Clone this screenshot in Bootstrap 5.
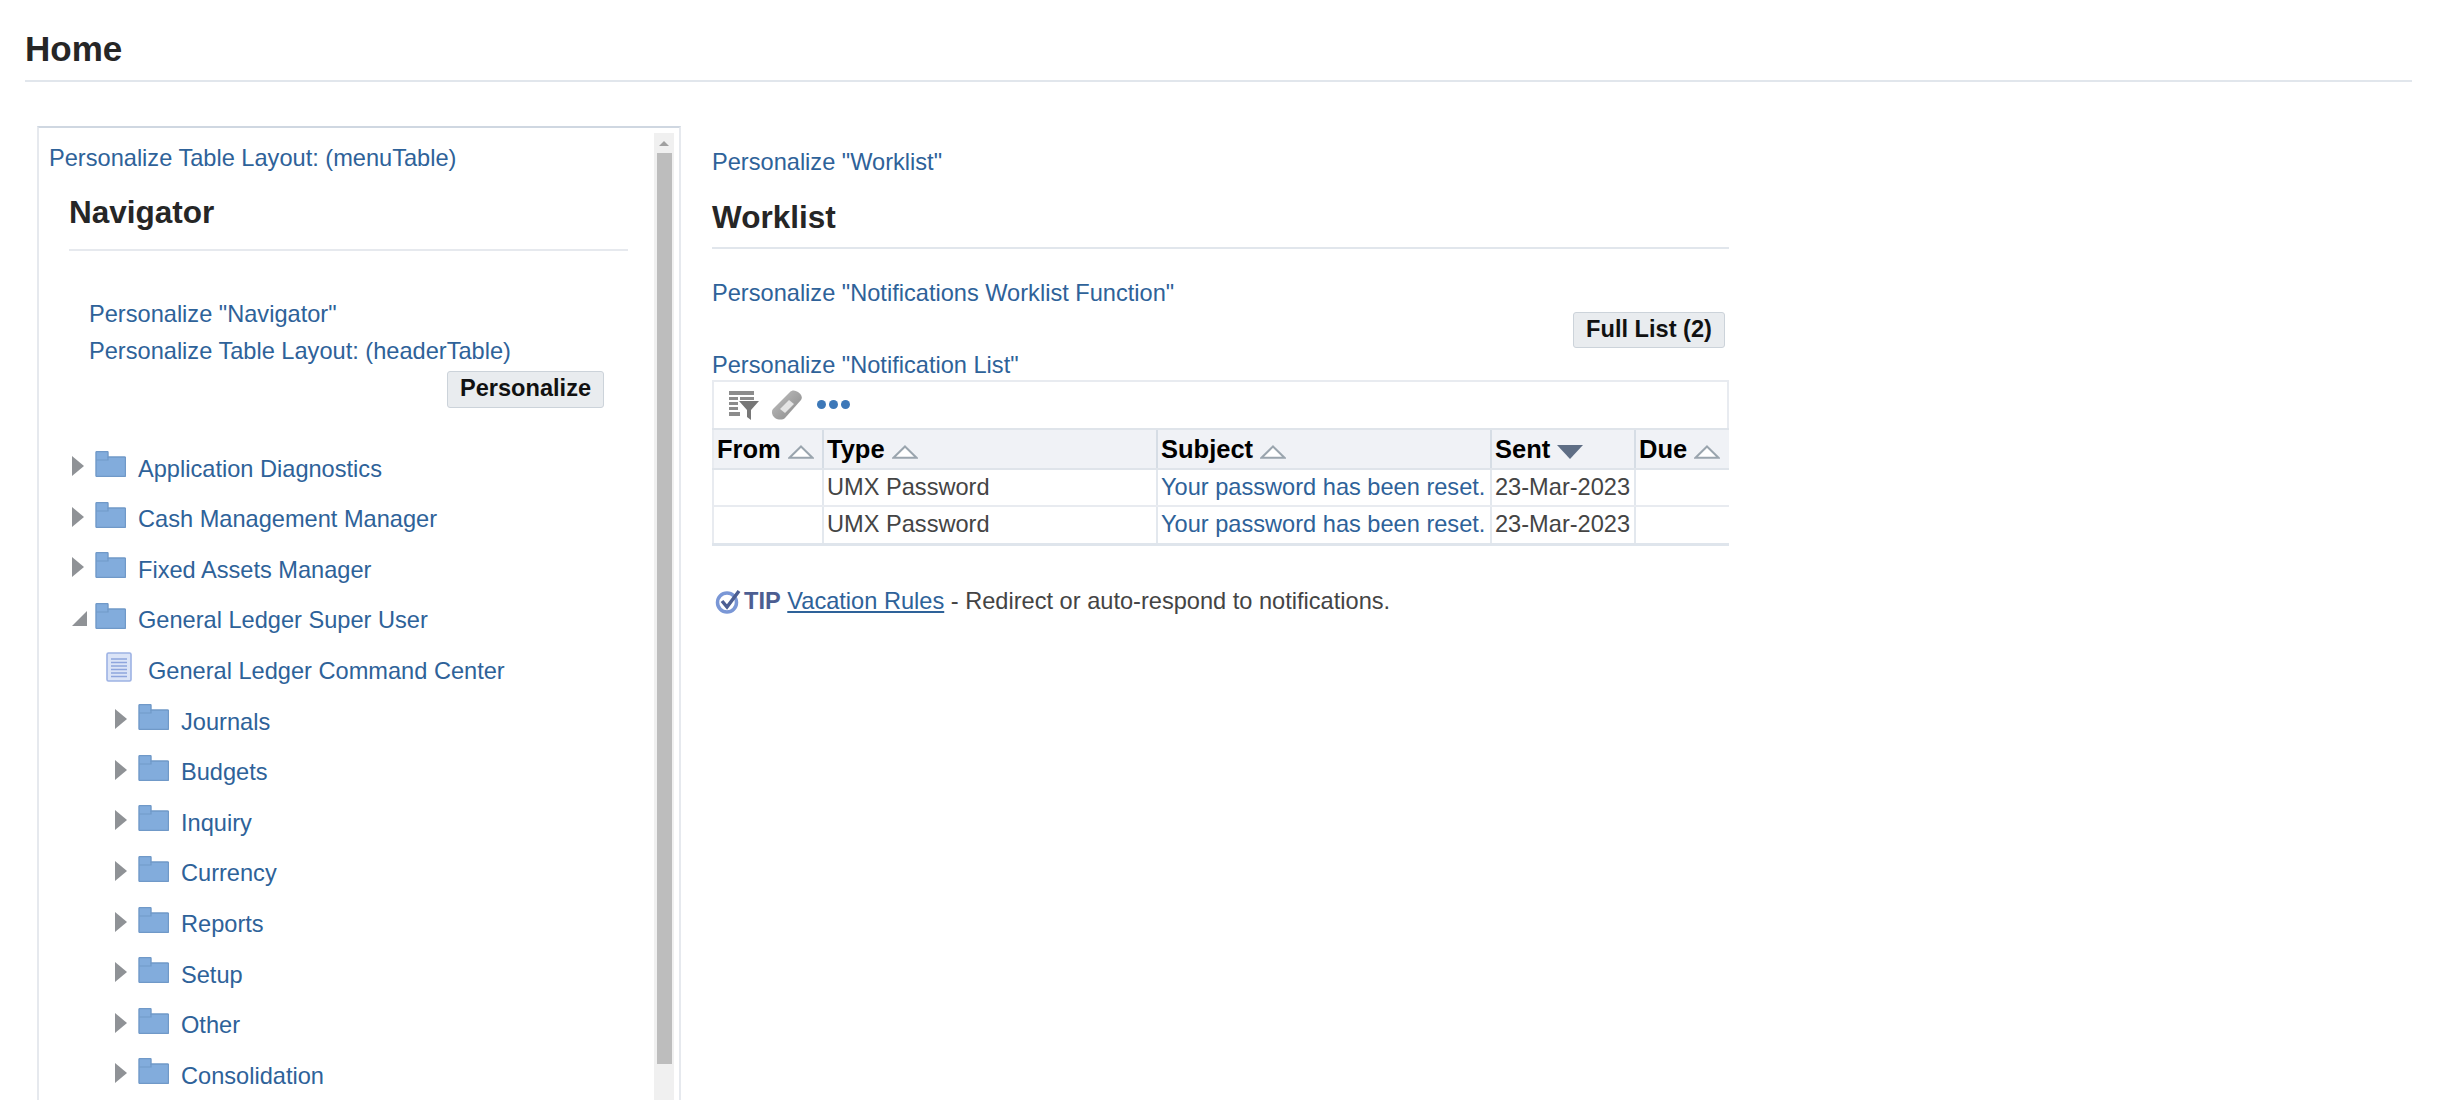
<!DOCTYPE html>
<html lang="en">
<head>
    <meta charset="UTF-8">
    <meta name="viewport" content="width=device-width, initial-scale=1.0">
    <title>Home</title>
    <link href="https://cdn.jsdelivr.net/npm/bootstrap@5.3.0/dist/css/bootstrap.min.css" rel="stylesheet">
    <style>
        html, body { height: 1100px; overflow: hidden; }
        body {
            font-family: "Liberation Sans", Arial, sans-serif;
            font-size: 23.6px;
            color: #444;
            background: #fff;
        }
        a { color: #2e6299; text-decoration: none; }
        .page-head { margin: 0 32px 0 25px; height: 82px; border-bottom: 2px solid #e1e6ec; padding-top: 29px; }
        .page-head h1 { font-size: 35px; font-weight: 700; line-height: 40px; color: #262626; margin: 0; }
        .sec-title { font-size: 31.5px; font-weight: 700; line-height: 40px; color: #262626; margin: 0; }
        .link-line { line-height: 37px; height: 37px; white-space: nowrap; }
        .oa-btn {
            font-size: 23.6px; font-weight: 700; line-height: 1; color: #111;
            background: #e9ecef; border: 1px solid #ccd3da; border-radius: 3px;
            padding: 0; height: 37px;
        }

        .nav-panel {
            width: 644px; height: 974px; margin: 44px 0 0 37px;
            border: 2px solid #e6e9ee; border-top-color: #cfd7e1; border-bottom: 0;
        }
        .nav-body { padding: 12px 0 0 10px; min-width: 0; }
        .nav-head { margin: 15px 0 0 20px; width: 559px; padding-bottom: 17px; border-bottom: 2px solid #e6e9ee; }
        .nav-links { margin: 44.5px 0 0 40px; }
        .nav-btn-row { width: 555px; }
        .nav-btn-row .oa-btn { width: 157px; margin-top: 1px; }
        .fake-scroll { width: 20px; margin: 5px 5px 0 0; background: #f0f0f0; }
        .scroll-up { height: 20px; }
        .scroll-thumb { width: 15px; height: 911px; background: #bdbdbd; }

        .tree { margin: 35px 0 0 23px; }
        .tree-row { height: 50.6px; white-space: nowrap; }
        .tree-row a { padding-top: 3px; }
        .tw-slot { width: 23px; margin-top: -3px; }
        .tree-row.lvl2 { padding-left: 43px; }
        .tree-row.doc { padding-left: 34px; }
        .tree-row .ico-folder { margin: -7px 12px 0 0; }
        .tree-row .ico-doc { margin: -7px 16px 0 0; }

        .work-col { width: 1017px; margin: 62px 0 0 31px; }
        .work-head { margin-top: 16px; padding-bottom: 10px; border-bottom: 2px solid #e1e6ec; }
        .work-top { line-height: 37px; height: 37px; }
        .work-list { margin-top: 26px; }
        .full-row { height: 35px; }
        .full-row .oa-btn { width: 152px; height: 36px; margin-right: 4px; }
        .list-link { height: 32.5px; }
        .tool-box { height: 48px; border: 2px solid #e8ebf0; border-bottom: 0; padding-left: 14px; gap: 12px; }
        .dots { gap: 3px; margin-left: 3px; }
        .dots i { width: 9px; height: 9px; border-radius: 50%; background: #3d78b8; display: block; }

        .notif-tbl { table-layout: fixed; width: 1017px; margin: 0; border-collapse: collapse; border-bottom: 3px solid #dfe5ec; color: #444; }
        .notif-tbl th, .notif-tbl td { border: 0; border-left: 2px solid #e3e8ee; padding: 0 0 0 3px; white-space: nowrap; overflow: hidden; }
        .notif-tbl tr > :first-child { border-left: 2px solid #e8ebf0; }
        .notif-tbl th {
            height: 40px; background: #f0f2f6; color: #000; font-weight: 700; font-size: 25.5px;
            border-top: 2px solid #dfe4ea; border-bottom: 2px solid #dfe4ea; border-left-color: #d6dde5;
        }
        .notif-tbl td { height: 35px; border-bottom: 2px solid #e8ebf0; }
        .notif-tbl tr:last-child td { border-bottom: 0; }
        .cw-from { width: 110px; }
        .cw-type { width: 334px; }
        .cw-subject { width: 334px; }
        .cw-sent { width: 144px; }
        .sort-tri { margin-left: 7px; vertical-align: -1px; }

        .tip-line { margin-top: 37px; line-height: 37px; white-space: nowrap; padding-left: 3px; }
        .tip-line svg { margin-right: 3px; }
        .tip-line b { color: #4c5e92; }
        .tip-line a { text-decoration: underline; }
    </style>
</head>
<body>
    <svg width="0" height="0" class="d-block">
        <defs>
            <symbol id="folder" viewBox="0 0 31 26">
                <path d="M1 1.5c0-.5.5-1 1-1h10c.5 0 1 .5 1 1V6h16.500c.5 0 1 .5 1 1v17.500c0 .5-.5 1-1 1H2c-.5 0-1-.5-1-1z" fill="#82acdc" stroke="#7099c8" stroke-width="1.4"/>
                <path d="M1 9h12V6" fill="none" stroke="#7099c8" stroke-width="1.2"/>
            </symbol>
            <symbol id="tw-right" viewBox="0 0 12 20"><path d="M0 0l12 10L0 20z" fill="#8f9296"/></symbol>
            <symbol id="tw-down" viewBox="0 0 15 15"><path d="M15 0v15H0z" fill="#8f9296"/></symbol>
            <symbol id="sort-off" viewBox="0 0 26 14"><path d="M13 1.500L24.500 12.800H1.500z" fill="#fff" stroke="#9aa5ae" stroke-width="2"/></symbol>
            <symbol id="sort-on" viewBox="0 0 26 14"><path d="M0 0h26L13 14z" fill="#5f6e85"/></symbol>
            <linearGradient id="grad-eraser" x1="0" y1="0" x2="1" y2="1">
                <stop offset="0" stop-color="#c4c4c4"/><stop offset="1" stop-color="#858585"/>
            </linearGradient>
        </defs>
    </svg>

    <div class="page-head"><h1>Home</h1></div>

    <div class="d-flex align-items-start">
        <div class="nav-panel d-flex justify-content-between flex-shrink-0">
            <div class="nav-body">
                <div class="link-line"><a href="#">Personalize Table Layout: (menuTable)</a></div>
                <div class="nav-head"><h2 class="sec-title">Navigator</h2></div>
                <div class="nav-links">
                    <div class="link-line"><a href="#">Personalize "Navigator"</a></div>
                    <div class="link-line"><a href="#">Personalize Table Layout: (headerTable)</a></div>
                </div>
                <div class="nav-btn-row d-flex justify-content-end"><button class="oa-btn">Personalize</button></div>

                <div class="tree">
                    <div class="tree-row d-flex align-items-center"><span class="tw-slot"><svg width="12" height="20" class="d-block"><use href="#tw-right"/></svg></span><svg width="31" height="26" class="ico-folder"><use href="#folder"/></svg><a href="#">Application Diagnostics</a></div>
                    <div class="tree-row d-flex align-items-center"><span class="tw-slot"><svg width="12" height="20" class="d-block"><use href="#tw-right"/></svg></span><svg width="31" height="26" class="ico-folder"><use href="#folder"/></svg><a href="#">Cash Management Manager</a></div>
                    <div class="tree-row d-flex align-items-center"><span class="tw-slot"><svg width="12" height="20" class="d-block"><use href="#tw-right"/></svg></span><svg width="31" height="26" class="ico-folder"><use href="#folder"/></svg><a href="#">Fixed Assets Manager</a></div>
                    <div class="tree-row d-flex align-items-center"><span class="tw-slot"><svg width="15" height="15" class="d-block ms-n1"><use href="#tw-down"/></svg></span><svg width="31" height="26" class="ico-folder"><use href="#folder"/></svg><a href="#">General Ledger Super User</a></div>
                    <div class="tree-row doc d-flex align-items-center">
                        <svg width="26" height="30" viewBox="0 0 26 30" class="ico-doc">
                            <rect x="1" y="1" width="24" height="28" rx="1.5" fill="#dbe4f7" stroke="#9db2e4" stroke-width="1.6"/>
                            <path d="M5 7h16M5 10.500h16M5 14h16M5 17.500h16M5 21h16M5 24.500h16" stroke="#8ea5dd" stroke-width="1.3"/>
                        </svg>
                        <a href="#">General Ledger Command Center</a>
                    </div>
                    <div class="tree-row lvl2 d-flex align-items-center"><span class="tw-slot"><svg width="12" height="20" class="d-block"><use href="#tw-right"/></svg></span><svg width="31" height="26" class="ico-folder"><use href="#folder"/></svg><a href="#">Journals</a></div>
                    <div class="tree-row lvl2 d-flex align-items-center"><span class="tw-slot"><svg width="12" height="20" class="d-block"><use href="#tw-right"/></svg></span><svg width="31" height="26" class="ico-folder"><use href="#folder"/></svg><a href="#">Budgets</a></div>
                    <div class="tree-row lvl2 d-flex align-items-center"><span class="tw-slot"><svg width="12" height="20" class="d-block"><use href="#tw-right"/></svg></span><svg width="31" height="26" class="ico-folder"><use href="#folder"/></svg><a href="#">Inquiry</a></div>
                    <div class="tree-row lvl2 d-flex align-items-center"><span class="tw-slot"><svg width="12" height="20" class="d-block"><use href="#tw-right"/></svg></span><svg width="31" height="26" class="ico-folder"><use href="#folder"/></svg><a href="#">Currency</a></div>
                    <div class="tree-row lvl2 d-flex align-items-center"><span class="tw-slot"><svg width="12" height="20" class="d-block"><use href="#tw-right"/></svg></span><svg width="31" height="26" class="ico-folder"><use href="#folder"/></svg><a href="#">Reports</a></div>
                    <div class="tree-row lvl2 d-flex align-items-center"><span class="tw-slot"><svg width="12" height="20" class="d-block"><use href="#tw-right"/></svg></span><svg width="31" height="26" class="ico-folder"><use href="#folder"/></svg><a href="#">Setup</a></div>
                    <div class="tree-row lvl2 d-flex align-items-center"><span class="tw-slot"><svg width="12" height="20" class="d-block"><use href="#tw-right"/></svg></span><svg width="31" height="26" class="ico-folder"><use href="#folder"/></svg><a href="#">Other</a></div>
                    <div class="tree-row lvl2 d-flex align-items-center"><span class="tw-slot"><svg width="12" height="20" class="d-block"><use href="#tw-right"/></svg></span><svg width="31" height="26" class="ico-folder"><use href="#folder"/></svg><a href="#">Consolidation</a></div>
                </div>
            </div>
            <div class="fake-scroll d-flex flex-column align-items-center flex-shrink-0">
                <div class="scroll-up d-flex align-items-center justify-content-center">
                    <svg width="10" height="5" viewBox="0 0 10 5" class="d-block"><path d="M5 0l5 5H0z" fill="#a0a0a0"/></svg>
                </div>
                <div class="scroll-thumb"></div>
            </div>
        </div>

        <div class="work-col flex-shrink-0">
            <div class="work-top"><a href="#">Personalize "Worklist"</a></div>
            <div class="work-head"><h2 class="sec-title">Worklist</h2></div>
            <div class="work-list">
                <div class="link-line"><a href="#">Personalize "Notifications Worklist Function"</a></div>
                <div class="full-row d-flex justify-content-end"><button class="oa-btn">Full List (2)</button></div>
                <div class="link-line list-link"><a href="#">Personalize "Notification List"</a></div>
                <div class="tool-box d-flex align-items-center">
                    <svg width="31" height="30" viewBox="0 0 31 30">
                        <path d="M1 1h25v4H1zM1 7h9v3H1zM12 7h14v3H12zM1 12h9v3H1zM1 17h9v3H1zM1 22h11v4H1z" fill="#8c8c8c"/>
                        <path d="M11 11h20l-8 9v10l-4-3v-7z" fill="#777"/>
                    </svg>
                    <svg width="31" height="30" viewBox="0 0 31 30">
                        <path d="M2 19L19 2c2-2 5-2 8 0s5 5 3 8L14 28c-2 2-7 2-10 0s-4-7-2-9z" fill="url(#grad-eraser)"/>
                        <path d="M9 19l9-9 5 4-9 9z" fill="#e4e4e4"/>
                    </svg>
                    <span class="dots d-flex"><i></i><i></i><i></i></span>
                </div>
                <table class="notif-tbl">
                    <thead>
                        <tr>
                            <th class="cw-from">From<svg width="26" height="14" class="sort-tri"><use href="#sort-off"/></svg></th>
                            <th class="cw-type">Type<svg width="26" height="14" class="sort-tri"><use href="#sort-off"/></svg></th>
                            <th class="cw-subject">Subject<svg width="26" height="14" class="sort-tri"><use href="#sort-off"/></svg></th>
                            <th class="cw-sent">Sent<svg width="26" height="14" class="sort-tri"><use href="#sort-on"/></svg></th>
                            <th>Due<svg width="26" height="14" class="sort-tri"><use href="#sort-off"/></svg></th>
                        </tr>
                    </thead>
                    <tbody>
                        <tr><td></td><td>UMX Password</td><td><a href="#">Your password has been reset.</a></td><td>23-Mar-2023</td><td></td></tr>
                        <tr><td></td><td>UMX Password</td><td><a href="#">Your password has been reset.</a></td><td>23-Mar-2023</td><td></td></tr>
                    </tbody>
                </table>
                <div class="tip-line d-flex align-items-center">
                    <svg width="26" height="25" viewBox="0 0 26 25">
                        <circle cx="12" cy="13.500" r="9.500" fill="#fff" stroke="#7a97d6" stroke-width="3.500"/>
                        <path d="M7 12l5 6L24 2" fill="none" stroke="#4c5e92" stroke-width="3.500"/>
                    </svg>
                    <b>TIP</b>&nbsp;<a href="#">Vacation Rules</a>&nbsp;- Redirect or auto-respond to notifications.
                </div>
            </div>
        </div>
    </div>
</body>
</html>
